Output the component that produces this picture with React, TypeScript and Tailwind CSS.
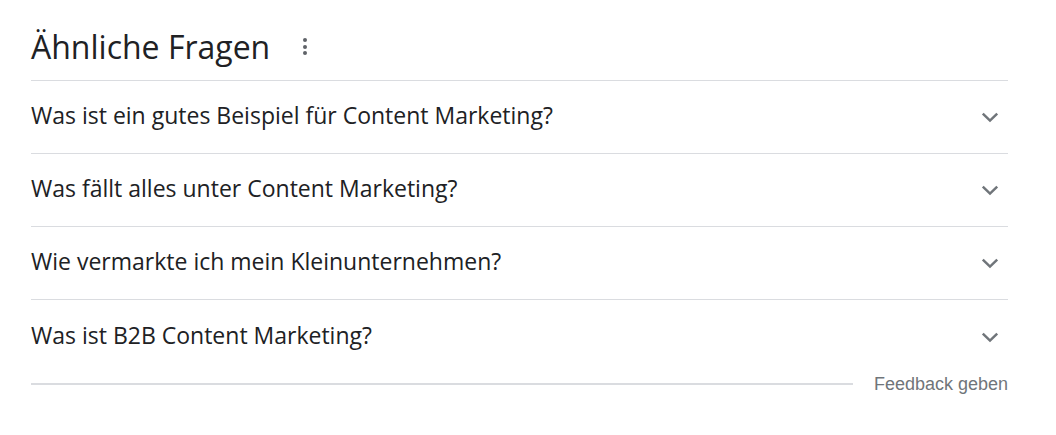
import React from "react";

const questions = [
  "Was ist ein gutes Beispiel für Content Marketing?",
  "Was fällt alles unter Content Marketing?",
  "Wie vermarkte ich mein Kleinunternehmen?",
  "Was ist B2B Content Marketing?",
];

function Chevron() {
  return (
    <svg width="24" height="24" viewBox="0 0 24 24" className="text-[#70757a]">
      <path d="M4.8 8.6 L12 15.6 L19.2 8.6" fill="none" stroke="currentColor" strokeWidth="2.5" />
    </svg>
  );
}

export default function App() {
  return (
    <div className="bg-white w-[1056px] h-[435px] pl-[31px]">
      <div className="w-[977px]">
        <div className="h-[81px] pt-[13px] flex items-center border-b border-[#dadce0]">
          <h2 className="text-[32px] text-[#202124] font-['Open_Sans',sans-serif] font-normal leading-none">
            Ähnliche Fragen
          </h2>
          <div className="ml-[33px] flex flex-col gap-[2.5px] items-center">
            <span className="block w-[4px] h-[4px] rounded-full bg-[#5f6368]" />
            <span className="block w-[4px] h-[4px] rounded-full bg-[#5f6368]" />
            <span className="block w-[4px] h-[4px] rounded-full bg-[#5f6368]" />
          </div>
        </div>
        {questions.map((q, i) => (
          <div
            key={q}
            className={`h-[73px] flex items-center justify-between ${i < questions.length - 1 ? "border-b border-[#dadce0]" : ""}`}
          >
            <span className="mb-[3px] text-[23px] text-[#202124] font-['Open_Sans',sans-serif]">{q}</span>
            <span className="mr-[6px]">
              <Chevron />
            </span>
          </div>
        ))}
        <div className="flex items-center mt-[2px]">
          <div className="flex-1 h-[2px] bg-[#dadce0]" />
          <span className="ml-[21px] text-[18px] text-[#70757a] font-['Liberation_Sans',Arial,sans-serif] leading-none">
            Feedback geben
          </span>
        </div>
      </div>
    </div>
  );
}
